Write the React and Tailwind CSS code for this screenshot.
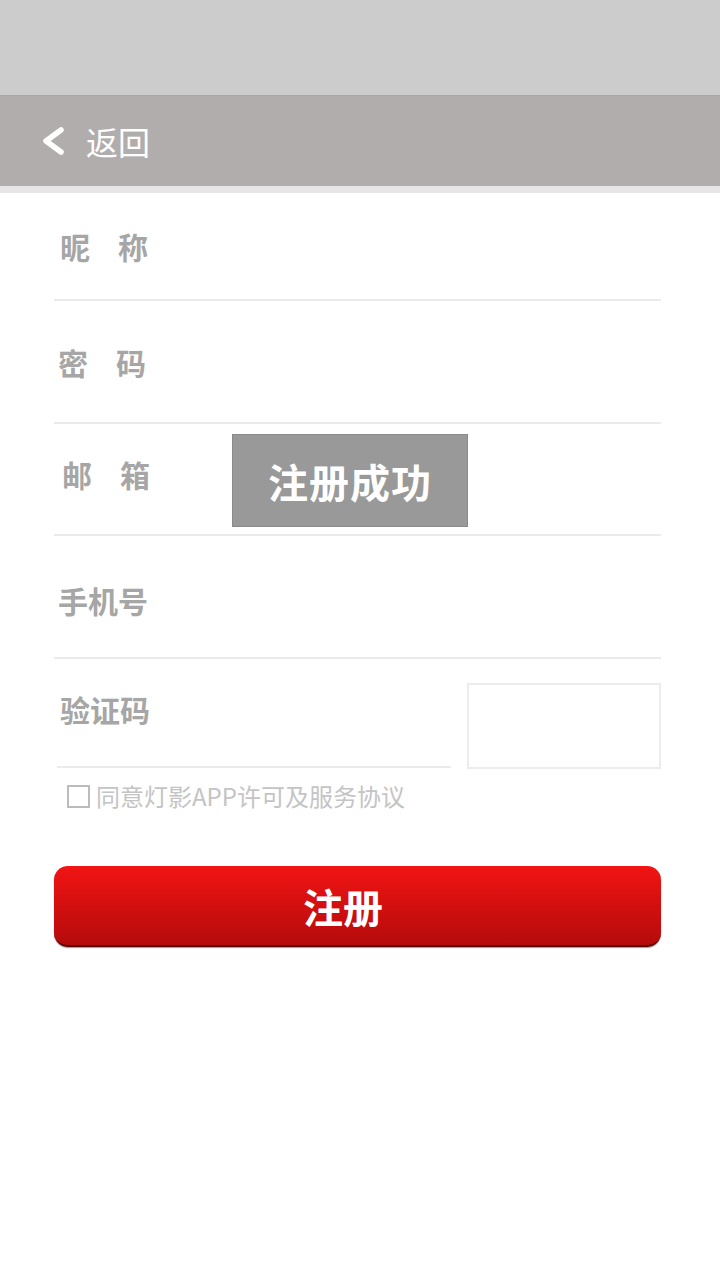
export default function App() {
  const font = { fontFamily: '"Noto Sans CJK SC", "Noto Sans", sans-serif' };

  return (
    <div className="w-[720px] h-[1280px] bg-white flex flex-col" style={font}>
      {/* status bar area */}
      <div className="h-[96px] bg-[#cccccc] border-b border-[#a9a5a5]" />

      {/* header */}
      <div className="h-[90px] bg-[#b1adad] flex items-center pl-[39px]">
        <svg width="28" height="32" viewBox="0 0 28 32" className="mr-[19px]">
          <path d="M22 5 L7 16 L22 27" fill="none" stroke="#ffffff" strokeWidth="5.5" strokeLinecap="round" strokeLinejoin="round" />
        </svg>
        <span className="text-white text-[32px] leading-none">返回</span>
      </div>
      <div className="h-[7px] bg-[#e6e6e6]" />

      {/* form */}
      <div className="pl-[54px] pr-[59px] flex flex-col">
        <div className="h-[108px] flex items-center pl-[6px] border-b-2 border-[#ebebeb]">
          <Label chars={["昵", "称"]} />
        </div>
        <div className="h-[123px] flex items-center pl-[4px] border-b-2 border-[#ebebeb]">
          <Label chars={["密", "码"]} />
        </div>
        <div className="h-[112px] flex items-center pl-[8px] pb-[10px] border-b-2 border-[#ebebeb] relative">
          <Label chars={["邮", "箱"]} />
          <div className="absolute left-[178px] top-[10px] w-[236px] h-[93px] bg-[#999999] border border-[#8a8a8a] flex items-center justify-center">
            <span className="text-white text-[40px] font-bold tracking-[1px]">注册成功</span>
          </div>
        </div>
        <div className="h-[123px] flex items-center pl-[4px] pt-[6px] border-b-2 border-[#ebebeb]">
          <span className="text-[30px] font-bold text-[#a6a6a6] leading-none">手机号</span>
        </div>

        <div className="flex items-start gap-[16px] pt-[24px]">
          <div className="flex-1 h-[85px] border-b-2 border-[#ebebeb] ml-[3px] pl-[3px] pt-[11px]">
            <span className="text-[30px] font-bold text-[#a6a6a6] leading-none">验证码</span>
          </div>
          <div className="w-[194px] h-[86px] border-2 border-[#ececec]" />
        </div>

        <div className="flex items-center mt-[15px] ml-[13px]">
          <div className="w-[23px] h-[23px] border-2 border-[#bcbcbc] mr-[6px]" />
          <span className="text-[24px] text-[#c4c4c4] leading-none">同意灯影APP许可及服务协议</span>
        </div>

        <button className="mt-[58px] h-[81px] w-full rounded-[14px] bg-gradient-to-b from-[#f21414] to-[#b50b0b] border-b-2 border-[#5a0505] flex items-center justify-center shadow-[0_1px_1px_rgba(0,0,0,0.4)]">
          <span className="text-white text-[40px] font-bold leading-none mr-[29px]">注册</span>
        </button>
      </div>
    </div>
  );
}

function Label({ chars }) {
  return (
    <div className="w-[88px] flex justify-between text-[30px] font-bold text-[#a6a6a6] leading-none">
      <span>{chars[0]}</span>
      <span>{chars[1]}</span>
    </div>
  );
}
